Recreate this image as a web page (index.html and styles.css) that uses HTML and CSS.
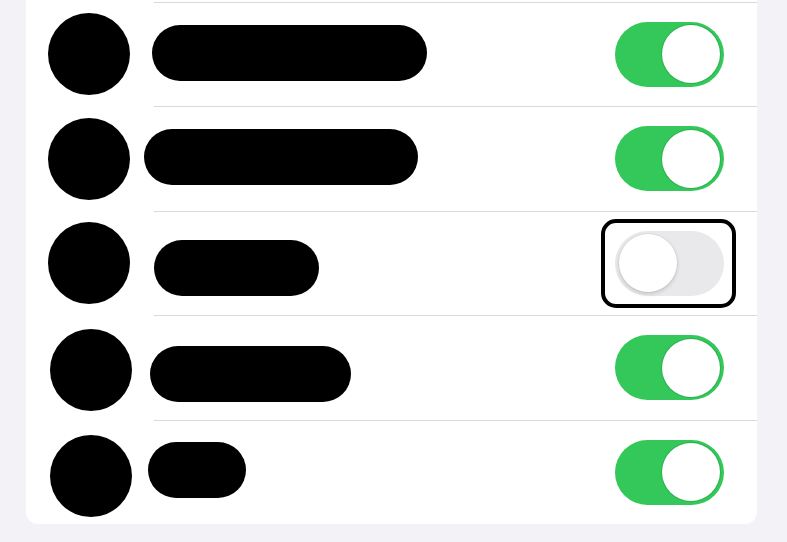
FILE: index.html
```html
<!DOCTYPE html>
<html lang="en">
<head>
    <meta charset="UTF-8">
    <meta name="viewport" content="width=device-width, initial-scale=1.0">
    <title>Settings</title>
    <link rel="stylesheet" href="styles.css">
</head>
<body>

    <div class="card">
        <div class="row">
            <div class="icon"></div>
            <div class="label" style="width: 275px; margin-left: 22px; margin-top: -2px;"></div>
            <div class="switch on"><span class="knob"></span></div>
        </div>
        <div class="row tall">
            <div class="icon"></div>
            <div class="label" style="width: 274px; margin-left: 14px; margin-top: -4px;"></div>
            <div class="switch on"><span class="knob"></span></div>
        </div>
        <div class="row">
            <div class="icon"></div>
            <div class="label" style="width: 165px; margin-left: 24px; margin-top: 10px;"></div>
            <div class="focus">
                <div class="switch off"><span class="knob"></span></div>
            </div>
        </div>
        <div class="row tall">
            <div class="icon shift low"></div>
            <div class="label" style="width: 201px; margin-left: 18px; margin-top: 12px;"></div>
            <div class="switch on"><span class="knob"></span></div>
        </div>
        <div class="row">
            <div class="icon shift lower"></div>
            <div class="label" style="width: 98px; margin-left: 16px; margin-top: -4px;"></div>
            <div class="switch on"><span class="knob"></span></div>
        </div>
    </div>

</body>
</html>
```

FILE: styles.css
```css
* {
    margin: 0;
    padding: 0;
    box-sizing: border-box;
}

body {
    font-family: 'Liberation Sans', Arial, sans-serif;
    background-color: #f2f2f7;
    height: 100vh;
    overflow: hidden;
}

.card {
    width: 731px;
    margin-left: 26px;
    padding-top: 2px;
    background-color: #fff;
    border-radius: 0 0 12px 12px;
}

/* each row draws its own separator, inset past the icon */
.row {
    display: flex;
    align-items: center;
    height: 104px;
    background: linear-gradient(#d9d9dc, #d9d9dc) no-repeat 128px 0 / 100% 1px;
}

.row.tall {
    height: 105px;
}

.icon {
    width: 82px;
    height: 82px;
    border-radius: 50%;
    background-color: #000;
    margin-left: 22px;
    flex-shrink: 0;
}

.icon.shift {
    margin-left: 24px;
}

.icon.low {
    margin-top: 4px;
}

.icon.lower {
    margin-top: 8px;
}

.label {
    height: 56px;
    border-radius: 28px;
    background-color: #000;
}

.switch {
    width: 109px;
    height: 65px;
    border-radius: 33px;
    margin-left: auto;
    margin-right: 33px;
    display: flex;
    align-items: center;
    padding: 0 4px;
    flex-shrink: 0;
}

.switch.on {
    background-color: #34c759;
    justify-content: flex-end;
}

.switch.off {
    background-color: #e9e9eb;
    justify-content: flex-start;
    margin: 0;
}

.knob {
    width: 58px;
    height: 58px;
    border-radius: 50%;
    background-color: #fff;
    box-shadow: 0 2px 4px rgba(0, 0, 0, 0.15), 0 0 0 1px rgba(0, 0, 0, 0.04);
}

.switch.on .knob {
    box-shadow: 0 0 0 1px rgba(30, 140, 60, 0.35);
}

.focus {
    margin-left: auto;
    margin-right: 21px;
    padding: 8px 8px 8px 10px;
    border: 4px solid #000;
    border-radius: 15px;
}
```
